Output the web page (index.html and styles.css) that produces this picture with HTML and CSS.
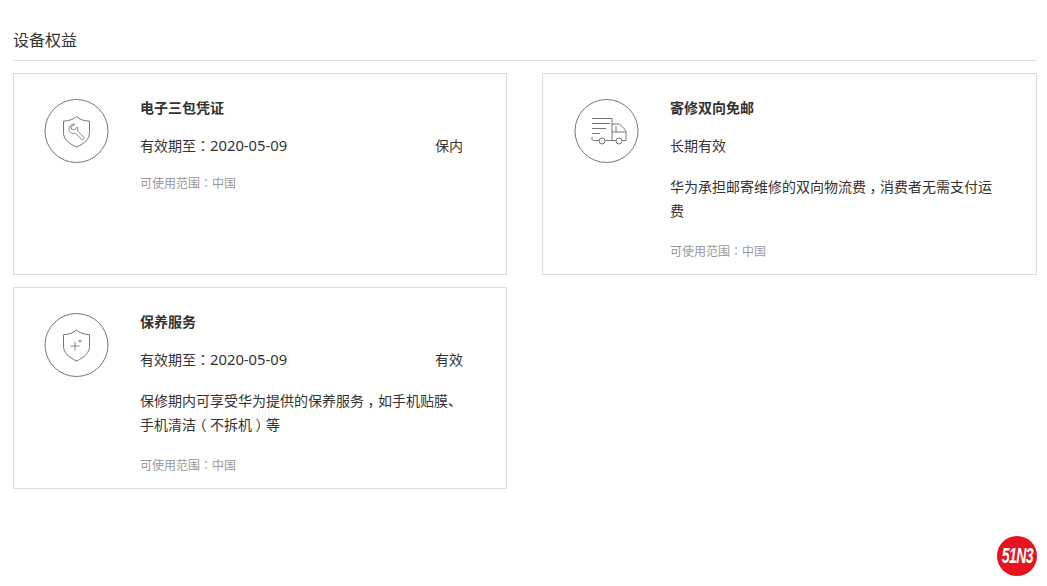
FILE: index.html
```html
<!DOCTYPE html>
<html lang="zh-CN">
<head>
<meta charset="utf-8">
<title>设备权益</title>
<link rel="stylesheet" href="styles.css">
</head>
<body>
<main class="page">
  <h1 class="heading">设备权益</h1>
  <div class="grid">
    <section class="card">
      <div class="icon">
        <svg width="66" height="66" viewBox="0 0 66 66" fill="none" stroke="#777" stroke-width="1">
          <circle cx="32.500" cy="32" r="31.500"/>
          <path d="M32.500 17.500c3 2.800 7 4.300 13 4.700v11.300c0 6.500-5 11-13 14.500-8-3.500-13-8-13-14.500V22.200c6-.4 10-1.900 13-4.700z"/>
          <path d="M31 25.300a5 5 0 0 0-5.800 6.400 5 5 0 0 0 6.200 2.500l6 6.100c1.500 1.300 3.500-.8 2.200-2.300l-6-6.100a5 5 0 0 0-.2-3.900l-3 3-2.900-.5-.5-2.900z" stroke-width=".9"/>
        </svg>
      </div>
      <div class="body">
        <h2 class="name">电子三包凭证</h2>
        <div class="row"><span>有效期至<span class="punct" lang="zh-TW">：</span><span class="num">2020-05-09</span></span><span>保内</span></div>
        <p class="scope">可使用范围<span class="punct" lang="zh-TW">：</span>中国</p>
      </div>
    </section>
    <section class="card card-alt">
      <div class="icon">
        <svg width="66" height="66" viewBox="0 0 66 66" fill="none" stroke="#777" stroke-width="1">
          <circle cx="32.500" cy="32" r="31.500"/>
          <path d="M18 19.500h20v22H31.500M18 24.500h18M18 29.500h14M18 34.500h8M18 38v2c0 1 .6 1.500 1.500 1.500h5.500"/>
          <circle cx="28" cy="42" r="3"/>
          <circle cx="45" cy="42" r="3"/>
          <path d="M38 25h7.500l5 5c1 1 1.500 2 1.500 3.500v8h-4M38 33h14M42 41.500h-4M42 27v6"/>
        </svg>
      </div>
      <div class="body">
        <h2 class="name">寄修双向免邮</h2>
        <div class="row"><span>长期有效</span></div>
        <p class="desc">华为承担邮寄维修的双向物流费<span class="mark">，</span>消费者无需支付运费</p>
        <p class="scope scope-after">可使用范围<span class="punct" lang="zh-TW">：</span>中国</p>
      </div>
    </section>
    <section class="card">
      <div class="icon">
        <svg width="66" height="66" viewBox="0 0 66 66" fill="none" stroke="#777" stroke-width="1">
          <circle cx="32.500" cy="32" r="31.500"/>
          <path d="M32.500 17c3 2.800 7 4.300 13 4.700v11.500c0 6.500-5 11-13 14.800-8-3.800-13-8.300-13-14.800V21.700c6-.4 10-1.900 13-4.700z"/>
          <path d="M31 28.500v9M26.500 33h9M36 26.500v3M34.500 28h3" stroke-width=".9"/>
        </svg>
      </div>
      <div class="body">
        <h2 class="name">保养服务</h2>
        <div class="row"><span>有效期至<span class="punct" lang="zh-TW">：</span><span class="num">2020-05-09</span></span><span>有效</span></div>
        <p class="desc">保修期内可享受华为提供的保养服务<span class="mark">，</span>如手机贴膜、手机清洁<span class="mark">（</span>不拆机<span class="mark">）</span>等</p>
        <p class="scope scope-after">可使用范围<span class="punct" lang="zh-TW">：</span>中国</p>
      </div>
    </section>
  </div>
</main>
<div class="badge"><span class="badge-text">51N3</span></div>
</body>
</html>
```
FILE: styles.css
```css
* { box-sizing: border-box; }
html, body { margin: 0; padding: 0; background: #fff; }
body {
  width: 1047px;
  height: 586px;
  overflow: hidden;
  position: relative;
  font-family: "Noto Sans", "Noto Sans CJK SC", sans-serif;
  color: #333;
}
.page { padding: 0 10px 0 13px; }
.heading {
  margin: 0;
  height: 61px;
  padding-top: 28px;
  font-size: 16px;
  line-height: 24px;
  font-weight: 400;
  border-bottom: 1px solid #e0e0e0;
}
.grid {
  display: grid;
  grid-template-columns: 494px 495px;
  grid-auto-rows: 202px;
  column-gap: 35px;
  row-gap: 12px;
  margin-top: 12px;
}
.card {
  display: flex;
  border: 1px solid #dcdcdc;
  padding: 25px 43px 0 30px;
}
.card-alt { padding-left: 31px; }
.icon { flex: none; width: 66px; height: 66px; margin-right: 30px; }
.icon svg { display: block; }
.body { flex: 1; min-width: 0; }
.name {
  margin: 0;
  font-size: 14px;
  line-height: 18px;
  font-weight: 700;
  color: #333;
}
.row {
  display: flex;
  justify-content: space-between;
  margin-top: 19px;
  font-size: 14px;
  line-height: 20px;
}
.punct { font-family: "Noto Sans CJK TC", sans-serif; line-height: 1; }
.num { font-size: 14.8px; line-height: 1; }
.mark { font-feature-settings: "halt"; padding: 0 .25em; }
.desc {
  margin: 19px 0 0;
  font-size: 14px;
  line-height: 24px;
}
.scope {
  margin: 19px 0 0;
  font-size: 12px;
  line-height: 18px;
  color: #999;
}
.scope-after { margin-top: 20px; }
.badge {
  position: absolute;
  left: 997px;
  top: 536px;
  width: 40px;
  height: 40px;
  border-radius: 50%;
  background: #e5141f;
  color: #fff;
  display: flex;
  align-items: center;
  justify-content: center;
}
.badge-text {
  display: inline-block;
  font: italic 700 22px/1 "Liberation Sans", sans-serif;
  letter-spacing: -1px;
  transform: scaleX(.64);
}
```
